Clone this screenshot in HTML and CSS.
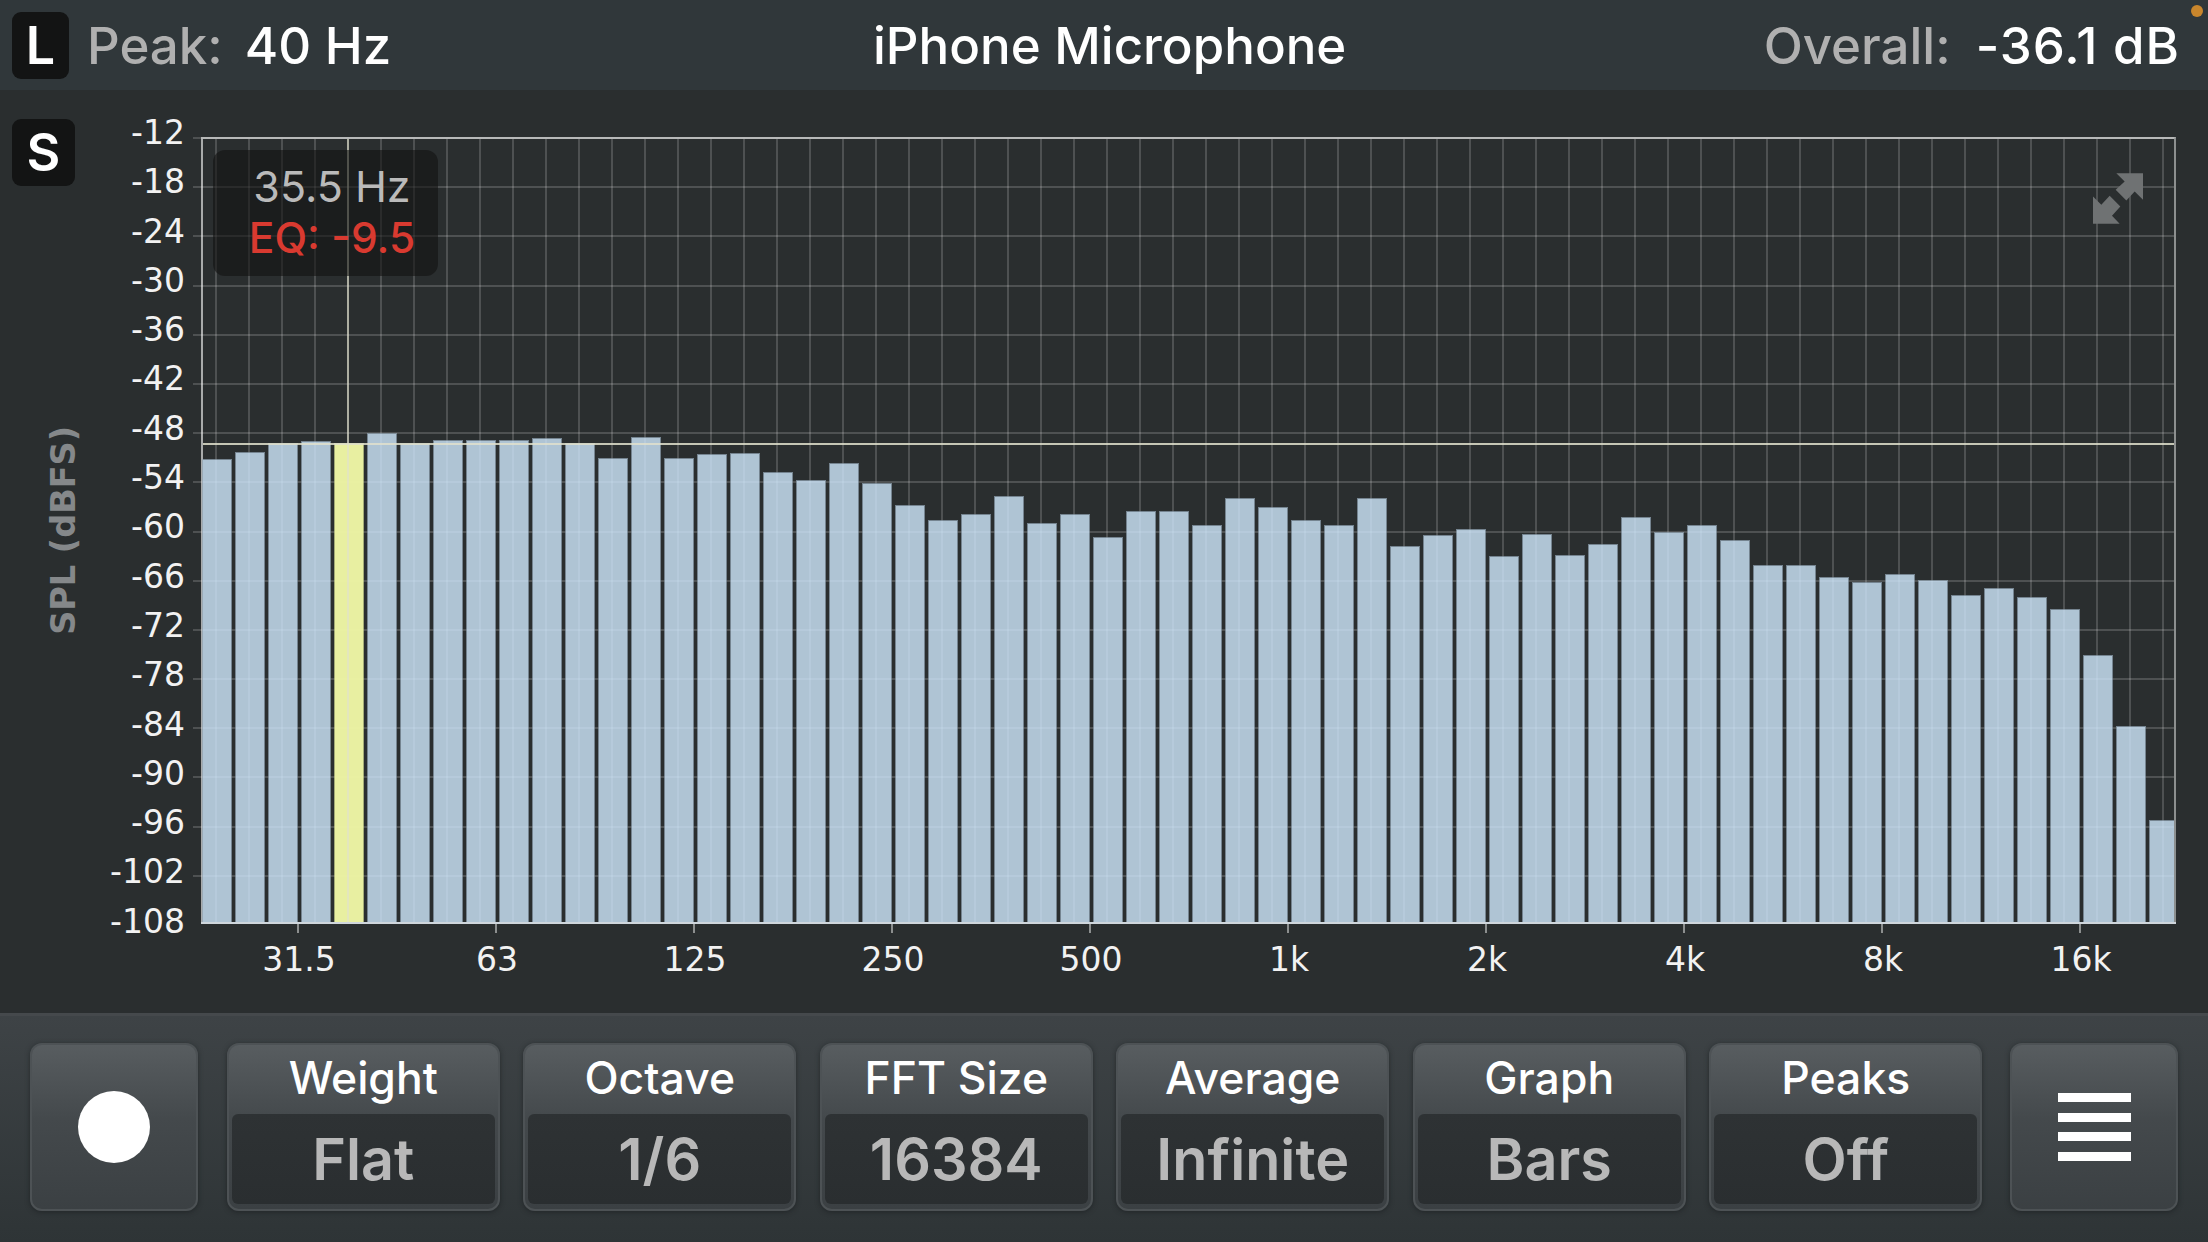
FILE: index.html
```html
<!DOCTYPE html>
<html lang="en">
<head>
<meta charset="UTF-8">
<title>iPhone Microphone - Spectrum</title>
<link rel="stylesheet" href="styles.css">
</head>
<body>

<header class="topbar">
  <div class="topbar-left">
    <span class="badge badge-l">L</span>
    <span class="stat-label">Peak:</span>
    <span class="stat-value">40 Hz</span>
  </div>
  <div class="topbar-title">iPhone Microphone</div>
  <div class="topbar-right">
    <span class="stat-label">Overall:</span>
    <span class="stat-value">-36.1 dB</span>
  </div>
  <span class="status-dot"></span>
</header>

<main class="chart-area">
  <div class="side">
    <span class="badge badge-s">S</span>
    <span class="axis-title">SPL (dBFS)</span>
  </div>

  <div class="y-axis">
    <span>-12</span><span>-18</span><span>-24</span><span>-30</span><span>-36</span><span>-42</span>
    <span>-48</span><span>-54</span><span>-60</span><span>-66</span><span>-72</span><span>-78</span>
    <span>-84</span><span>-90</span><span>-96</span><span>-102</span><span>-108</span>
  </div>

  <div class="chart-col">
    <div class="plot">
      <div class="grid-h"></div>
      <div class="grid-v"></div>

      <div class="bars">
        <div class="bar" style="height:465px"></div>
        <div class="bar" style="height:472px"></div>
        <div class="bar" style="height:481px"></div>
        <div class="bar" style="height:483px"></div>
        <div class="bar bar-active" style="height:481px"></div>
        <div class="bar" style="height:491px"></div>
        <div class="bar" style="height:481px"></div>
        <div class="bar" style="height:484px"></div>
        <div class="bar" style="height:484px"></div>
        <div class="bar" style="height:484px"></div>
        <div class="bar" style="height:486px"></div>
        <div class="bar" style="height:481px"></div>
        <div class="bar" style="height:466px"></div>
        <div class="bar" style="height:487px"></div>
        <div class="bar" style="height:466px"></div>
        <div class="bar" style="height:470px"></div>
        <div class="bar" style="height:471px"></div>
        <div class="bar" style="height:452px"></div>
        <div class="bar" style="height:444px"></div>
        <div class="bar" style="height:461px"></div>
        <div class="bar" style="height:441px"></div>
        <div class="bar" style="height:419px"></div>
        <div class="bar" style="height:404px"></div>
        <div class="bar" style="height:410px"></div>
        <div class="bar" style="height:428px"></div>
        <div class="bar" style="height:401px"></div>
        <div class="bar" style="height:410px"></div>
        <div class="bar" style="height:387px"></div>
        <div class="bar" style="height:413px"></div>
        <div class="bar" style="height:413px"></div>
        <div class="bar" style="height:399px"></div>
        <div class="bar" style="height:426px"></div>
        <div class="bar" style="height:417px"></div>
        <div class="bar" style="height:404px"></div>
        <div class="bar" style="height:399px"></div>
        <div class="bar" style="height:426px"></div>
        <div class="bar" style="height:378px"></div>
        <div class="bar" style="height:389px"></div>
        <div class="bar" style="height:395px"></div>
        <div class="bar" style="height:368px"></div>
        <div class="bar" style="height:390px"></div>
        <div class="bar" style="height:369px"></div>
        <div class="bar" style="height:380px"></div>
        <div class="bar" style="height:407px"></div>
        <div class="bar" style="height:392px"></div>
        <div class="bar" style="height:399px"></div>
        <div class="bar" style="height:384px"></div>
        <div class="bar" style="height:359px"></div>
        <div class="bar" style="height:359px"></div>
        <div class="bar" style="height:347px"></div>
        <div class="bar" style="height:342px"></div>
        <div class="bar" style="height:350px"></div>
        <div class="bar" style="height:344px"></div>
        <div class="bar" style="height:329px"></div>
        <div class="bar" style="height:336px"></div>
        <div class="bar" style="height:327px"></div>
        <div class="bar" style="height:315px"></div>
        <div class="bar" style="height:269px"></div>
        <div class="bar" style="height:198px"></div>
        <div class="bar" style="height:104px"></div>
      </div>

      <div class="cursor-v"></div>
      <div class="cursor-h"></div>

      <div class="readout">
        <div class="readout-freq">35.5 Hz</div>
        <div class="readout-eq">EQ: -9.5</div>
      </div>

      <svg class="expand-icon" viewBox="580 520 150 152">
        <polygon points="650,520 730,520 730,600 705,575 680,602 648,570 675,545"/>
        <polygon points="580,590 580,672 660,672 637,648 662,620 630,588 605,615"/>
      </svg>
    </div>

    <div class="x-axis">
      <span>31.5</span><span>63</span><span>125</span><span>250</span><span>500</span>
      <span>1k</span><span>2k</span><span>4k</span><span>8k</span><span>16k</span>
    </div>
  </div>
</main>

<footer class="controls">
  <button class="btn btn-square"><span class="record-dot"></span></button>

  <div class="btn-group">
    <button class="btn btn-option">
      <span class="btn-label">Weight</span>
      <span class="btn-value">Flat</span>
    </button>
    <button class="btn btn-option">
      <span class="btn-label">Octave</span>
      <span class="btn-value">1/6</span>
    </button>
    <button class="btn btn-option">
      <span class="btn-label">FFT Size</span>
      <span class="btn-value">16384</span>
    </button>
    <button class="btn btn-option">
      <span class="btn-label">Average</span>
      <span class="btn-value">Infinite</span>
    </button>
    <button class="btn btn-option">
      <span class="btn-label">Graph</span>
      <span class="btn-value">Bars</span>
    </button>
    <button class="btn btn-option">
      <span class="btn-label">Peaks</span>
      <span class="btn-value">Off</span>
    </button>
  </div>

  <button class="btn btn-square">
    <span class="menu-icon"><i></i><i></i><i></i><i></i></span>
  </button>
</footer>

</body>
</html>
```

FILE: styles.css
```css
* {
  box-sizing: border-box;
}

html, body {
  margin: 0;
  padding: 0;
}

body {
  width: 2208px;
  height: 1242px;
  overflow: hidden;
  background-color: #2a2e2f;
  font-family: 'Inter', 'Liberation Sans', sans-serif;
  color: #fff;
}

/* top bar */
.topbar {
  position: relative;
  display: grid;
  grid-template-columns: 861px auto 1fr;
  align-items: center;
  height: 90px;
  padding: 0 28px 0 12px;
  background-color: #30373a;
  font-size: 51px;
  font-weight: 500;
}

.topbar-left {
  display: flex;
  align-items: center;
}

.topbar-right {
  display: flex;
  justify-content: flex-end;
}

.stat-label {
  color: #b0b0b0;
}

.stat-value {
  margin-left: 22px;
}

.topbar-left .stat-label {
  margin-left: 18px;
}

.topbar-right .stat-value {
  margin-left: 25px;
  letter-spacing: 1px;
}

.status-dot {
  position: absolute;
  top: 5px;
  right: 5px;
  width: 12px;
  height: 12px;
  border-radius: 50%;
  background-color: #c9862c;
}

.badge {
  display: flex;
  align-items: center;
  justify-content: center;
  height: 67px;
  border-radius: 9px;
  background-color: #131414;
  color: #fff;
  font-size: 52px;
  font-weight: 600;
}

.badge-l {
  width: 57px;
}

.badge-s {
  width: 63px;
}

/* chart */
.chart-area {
  display: flex;
  height: 923px;
}

.side {
  display: flex;
  flex-direction: column;
  width: 84px;
  padding: 29px 0 0 12px;
}

.axis-title {
  margin: 240px 0 0 35px;
  writing-mode: vertical-rl;
  transform: rotate(180deg);
  font-family: 'DejaVu Sans', sans-serif;
  font-size: 33.5px;
  font-weight: bold;
  line-height: 33px;
  color: #85888a;
}

.y-axis {
  display: flex;
  flex-direction: column;
  width: 101px;
  padding-top: 18px;
  font-family: 'DejaVu Sans', sans-serif;
  font-size: 33px;
  text-align: right;
  color: #f2f2f2;
}

.y-axis span {
  display: block;
  height: 49.3px;
  line-height: 49.3px;
}

.chart-col {
  width: 1975px;
  margin-left: 16px;
  padding-top: 47px;
}

.plot {
  position: relative;
  height: 787px;
  border-top: 2px solid #a9abab;
  border-left: 2px solid #a9abab;
  border-right: 2px solid #8c8f8f;
}

/* line along the foot of the bars */
.plot::after {
  content: "";
  position: absolute;
  left: -2px;
  right: -2px;
  bottom: 0;
  height: 2px;
  background-color: #cfd6dc;
}

.grid-h {
  position: absolute;
  top: -2px;
  bottom: 0;
  left: -10px;
  right: 0;
  background: repeating-linear-gradient(to bottom, rgba(255, 255, 255, 0.17) 0, rgba(255, 255, 255, 0.17) 2px, transparent 2px, transparent 49.19px);
}

.grid-v {
  position: absolute;
  top: 0;
  bottom: 0;
  left: 0;
  right: 0;
  background: linear-gradient(to right, rgba(255, 255, 255, 0.17) 2px, transparent 2px) 12px 0 / 33px 100% repeat-x;
}

.bars {
  position: absolute;
  left: -1px;
  right: 0;
  bottom: 0;
  display: flex;
  align-items: flex-end;
  gap: 3px;
  height: 100%;
  overflow: hidden;
}

.bar {
  flex: 0 0 30px;
  border: 1px solid rgba(150, 170, 185, 0.7);
  border-bottom: none;
  background-color: rgba(205, 229, 249, 0.82);
  background-clip: padding-box;
}

.bar-active {
  border-color: rgba(215, 225, 150, 0.7);
  background-color: rgba(238, 246, 165, 0.97);
}

.cursor-v {
  position: absolute;
  top: 0;
  bottom: 0;
  left: 144px;
  width: 2px;
  background-color: rgba(225, 225, 205, 0.65);
}

.cursor-h {
  position: absolute;
  top: 304px;
  left: 0;
  right: 0;
  height: 2px;
  background-color: rgba(225, 225, 205, 0.85);
}

.readout {
  position: absolute;
  top: 11px;
  left: 10px;
  width: 225px;
  height: 126px;
  padding: 10px 0 0 13px;
  border-radius: 12px;
  background-color: rgba(18, 18, 18, 0.6);
  text-align: center;
  line-height: 52px;
}

.readout-freq {
  color: #bababa;
  font-size: 43px;
}

.readout-eq {
  color: #d93a30;
  font-size: 42.5px;
  font-weight: 500;
}

.expand-icon {
  position: absolute;
  top: 34px;
  left: 1890px;
  width: 50px;
  height: 51px;
  fill: #6f7273;
}

.x-axis {
  display: flex;
  margin-left: -1px;
  font-family: 'DejaVu Sans', sans-serif;
  font-size: 33px;
  color: #f2f2f2;
}

.x-axis span {
  flex: 0 0 198px;
  padding-top: 16px;
  text-align: center;
  position: relative;
}

/* tick under each frequency label */
.x-axis span::before {
  content: "";
  position: absolute;
  top: 0;
  left: 97px;
  width: 2px;
  height: 9px;
  background-color: #8c8f8f;
}

/* bottom controls */
.controls {
  display: flex;
  height: 229px;
  padding: 27px 30px 0;
  border-top: 3px solid #45494c;
  background: linear-gradient(to bottom, #3e4346, #2e3436);
}

.btn-group {
  display: flex;
  gap: 23.5px;
  margin: 0 28px 0 29px;
}

.btn {
  height: 168px;
  padding: 0;
  border: 2px solid #4d5255;
  border-radius: 12px;
  background: linear-gradient(to bottom, #585d60, #44494c 45%, #3b4043);
  box-shadow: 0 1px 5px rgba(20, 24, 26, 0.55);
  color: #fff;
  font-family: inherit;
}

.btn-square {
  display: flex;
  align-items: center;
  justify-content: center;
  width: 168px;
}

.btn-option {
  display: flex;
  flex-direction: column;
  width: 273px;
  padding: 0 3px 5px;
}

.btn-label {
  height: 69px;
  line-height: 67px;
  font-size: 44.5px;
  font-weight: 500;
}

.btn-value {
  flex: 1;
  border-radius: 6px;
  background: linear-gradient(to bottom, #2e3234, #2a2e30);
  color: #b8b8b8;
  font-size: 57.5px;
  font-weight: 600;
  line-height: 90px;
}

.record-dot {
  width: 72px;
  height: 72px;
  border-radius: 50%;
  background-color: #fff;
}

.menu-icon {
  display: flex;
  flex-direction: column;
  gap: 10.5px;
  width: 73px;
}

.menu-icon i {
  display: block;
  height: 9px;
  background-color: #fff;
}
```
